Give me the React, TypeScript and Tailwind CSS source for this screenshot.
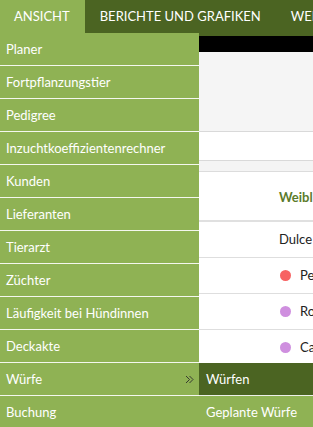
import { useState } from "react";

const menuItems = [
  "Planer",
  "Fortpflanzungstier",
  "Pedigree",
  "Inzuchtkoeffizientenrechner",
  "Kunden",
  "Lieferanten",
  "Tierarzt",
  "Züchter",
  "Läufigkeit bei Hündinnen",
  "Deckakte",
  "Würfe",
  "Buchung",
];

const subItems = ["Würfen", "Geplante Würfe"];

const rows = [
  { name: "Dulce", dot: "" },
  { name: "Pepa", dot: "bg-[#f76262]" },
  { name: "Rosa", dot: "bg-[#cf8fdf]" },
  { name: "Canela", dot: "bg-[#cf8fdf]" },
];

function DoubleChevron() {
  return (
    <svg width="9" height="9" viewBox="0 0 9 9" fill="none" stroke="#2d2d2d" strokeWidth="0.9">
      <path d="M1 1l3.5 3.5L1 8" />
      <path d="M4.5 1L8 4.5 4.5 8" />
    </svg>
  );
}

export default function App() {
  const [active] = useState("Würfe");

  return (
    <div
      className="relative w-[313px] h-[427px] overflow-hidden bg-white text-[13px]"
      style={{ fontFamily: "Lato, 'Noto Sans', sans-serif" }}
    >
      {/* Top navigation */}
      <nav className="flex h-[36px] bg-[#4b6422] text-white uppercase whitespace-nowrap">
        <div className="relative h-[33px] px-[14px] pr-[15px] flex items-center bg-[#8fb254]">
          ANSICHT
        </div>
        <div className="h-[33px] px-[15px] flex items-center">Berichte und Grafiken</div>
        <div className="h-[33px] px-[15px] flex items-center">Werkzeuge</div>
      </nav>

      {/* Page content behind the dropdown */}
      <div className="h-[16px] bg-black" />
      <div className="h-[80px] bg-[#f5f5f5] border-b border-[#d9d9d9]" />
      <div className="h-[29px] bg-white border-b border-[#d9d9d9]" />
      <div className="h-[11px] bg-[#f4f4f4] border-b border-[#dcdcdc]" />

      <div className="grid grid-cols-[279px_1fr] text-[#222] whitespace-nowrap">
        <div className="h-[50px] border-b-2 border-[#e0e0e0]" />
        <div className="h-[50px] border-b-2 border-[#e0e0e0] flex items-center pt-[4px] font-bold text-[#5b7b2b]">
          Weiblich
        </div>
        {rows.map((r) => (
          <div key={r.name} className="contents">
            <div className="h-[36px] border-b border-[#dedede]" />
            <div className="h-[36px] border-b border-[#dedede] flex items-center gap-[9px]">
              {r.dot && <span className={`w-[11px] h-[11px] rounded-full ml-[1px] ${r.dot}`} />}
              {r.name}
            </div>
          </div>
        ))}
      </div>

      {/* Dropdown menu */}
      <ul className="absolute left-0 top-[33px] w-[199px] bg-[#8fb254] text-white">
        {menuItems.map((item) => (
          <li
            key={item}
            className="relative h-[33px] border-b border-white/90 flex items-center justify-between pl-[6px] pr-[5px] pt-[1px] whitespace-nowrap"
          >
            <span>{item}</span>
            {item === active && (
              <>
                <DoubleChevron />
                <ul className="absolute left-full top-0 w-[140px] bg-[#8fb254]">
                  {subItems.map((s, i) => (
                    <li
                      key={s}
                      className={`h-[33px] border-b border-white/90 flex items-center pl-[7px] pt-[1px] ${
                        i === 0 ? "bg-[#4b6422]" : ""
                      }`}
                    >
                      {s}
                    </li>
                  ))}
                </ul>
              </>
            )}
          </li>
        ))}
      </ul>
    </div>
  );
}
